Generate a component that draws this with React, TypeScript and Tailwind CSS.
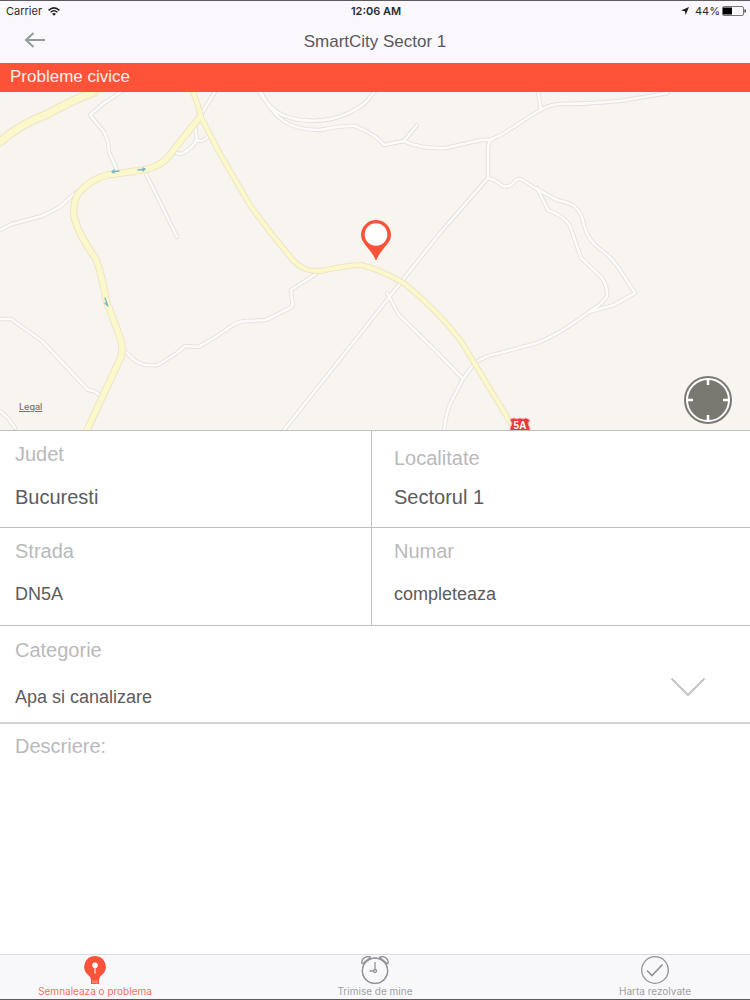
import { useState } from 'react';

const HELVETICA = "font-['Liberation_Sans',Arial,sans-serif]";

const minorRoads = [
  'M0 230 L12 224 L42 216 L60 207 L76 192',
  'M124 90 L104 103 L90 115 L104 132 L108 142 L109 152 L117 170',
  'M144 170 L158 198 L177 237',
  'M216 90 L199 118 M195 126 L197 140 Q193 147 182 154 L175 153 M196 140 L202 141 L208 137',
  'M0 319 L11 319 L42 341 L88 390 L94 391 L101 396',
  'M0 411 L8 418 L15 428',
  'M124 350 L133 359 Q142 367 158 365 L177 353 L185 346 L198 347 Q212 340 230 327 Q240 320 250 321 L266 320 L290 308 Q294 306 292 300 L291 290 L316 274',
  'M258 90 Q268 107 282 115 Q305 124 331 119 Q350 115 365 103 L376 90',
  'M260 90 Q270 112 285 122 Q298 130 320 130 Q345 125 355 126 Q377 135 384 145 L404 141 Q420 149 446 148 L481 140 L490 140',
  'M404 141 L417 125',
  'M490 140 L501 135 L540 110 Q552 104 560 104 Q590 104 620 101 L668 93',
  'M538 90 L541 110',
  'M490 140 L488 147 L488 178 L440 233 L284 430',
  'M488 178 L494 180 L503 186 Q510 188 515 181 Q519 177 524 181 L535 188 L557 200 Q571 203 575 207 Q582 213 584 225 Q588 241 600 249 Q611 257 618 267 L635 293 L614 305 L589 312',
  'M537 188 L548 210 Q568 218 571 229 L581 258 L597 273 Q608 282 607 296 Q604 303 589 312 Q560 334 537 343 L500 353 Q483 356 474 364 L463 379 L450 404 Q446 414 444 430',
  'M387 293 L399 315 L435 350 L463 379',
];

const mainRoads = [
  { d: 'M0 142 Q20 124 48 114 Q66 103 94 92', width: 7 },
  { d: 'M192 90 Q198 103 201 117 L219 152 L250 205 Q270 233 293 260 Q303 272 320 271 Q350 265 361 265 Q382 270 405 284 Q437 310 461 341 L515 430', width: 4 },
  { d: 'M200 117 L187 133 L169 156 Q160 167 143 170 L107 175 Q89 180 78 194 Q73 202 74 216 Q77 232 96 259 Q102 275 106 300 L121 340 Q123 350 121 357 L87 430', width: 5.5 },
];

function CityMap() {
  return (
    <svg
      className="block h-full w-full"
      viewBox="0 92 750 338"
      preserveAspectRatio="xMidYMid slice"
      fill="none"
      strokeLinejoin="round"
      strokeLinecap="round"
      aria-hidden="true"
    >
      <rect x="0" y="92" width="750" height="338" fill="#f8f4ef" />
      {minorRoads.map((d) => (
        <path key={d} d={d} stroke="#e5e1dc" strokeWidth="4.4" />
      ))}
      {minorRoads.map((d) => (
        <path key={d} d={d} stroke="#fcfbf9" strokeWidth="2.6" />
      ))}
      {mainRoads.map((r) => (
        <path key={r.d} d={r.d} stroke="#efe4c6" strokeWidth={r.width + 2} />
      ))}
      {mainRoads.map((r) => (
        <path key={r.d} d={r.d} stroke="#fbf9cb" strokeWidth={r.width} />
      ))}
      <g stroke="#74b8cc" strokeWidth="1.3">
        <path d="M119 171 L112 172 M114 170 L112 172 L114 173" />
        <path d="M138 170 L145 169 M143 168 L145 169 L143 171" />
        <path d="M105 298 L108 306 M105 303 L108 306" />
      </g>
      <path
        d="M511 419 L514 418 L517 419 Q520 417 523 419 L526 418 L530 420 L528 423 L530 429 V432 H510 V429 L512 423 L510 420 Z"
        fill="#e8383d"
        stroke="#f4a9a7"
        strokeWidth="1"
      />
      <text x="520" y="429" textAnchor="middle" fill="#fff" fontSize="10" fontWeight="700" fontFamily="Liberation Sans">
        5A
      </text>
    </svg>
  );
}

function Pin() {
  return (
    <svg className="block h-10 w-8" viewBox="-1 0 32 40" aria-hidden="true">
      <path d="M16 0 A15 15 0 0 0 1 15 C1 24 11 28 16 41 C21 28 31 24 31 15 A15 15 0 0 0 16 0Z" fill="#f9533a" />
      <circle cx="16" cy="14.500" r="11.300" fill="#fff" />
    </svg>
  );
}

function Crosshair() {
  return (
    <svg className="block h-12 w-12" viewBox="0 0 48 48" fill="none" aria-hidden="true">
      <circle cx="24" cy="24" r="24" fill="#797871" />
      <circle cx="24" cy="24" r="21" stroke="#fff" strokeWidth="2" />
      <path d="M24 3v6M24 39v6M3 24h6M39 24h6" stroke="#fff" strokeWidth="2.600" />
    </svg>
  );
}

function StatusBar() {
  return (
    <div className="grid h-5 grid-cols-3 items-center pr-1 pl-1.5 font-[Inter,sans-serif] text-[11px] leading-5 text-[#2a292c]">
      <div className="flex items-center gap-1.5">
        <span>Carrier</span>
        <svg className="h-[9px] w-3" viewBox="0 0 12 9" fill="none" stroke="#1d1d1f" aria-hidden="true">
          <path d="M0.600 3.300 Q6 -1.500 11.400 3.300" strokeWidth="1.600" />
          <path d="M2.600 5.300 Q6 2.300 9.400 5.300" strokeWidth="1.500" />
          <path d="M4 6.700 Q6 5.300 8 6.700 L6 8.800Z" fill="#1d1d1f" stroke="none" />
        </svg>
      </div>
      <span className="text-center font-semibold">12:06 AM</span>
      <div className="flex items-center justify-end gap-0.5">
        <svg className="mr-1 h-2 w-2" viewBox="0 0 8 8" fill="#1d1d1f" aria-hidden="true">
          <path d="M8 0 L4.600 8 L3.900 4.200 L0 3.600Z" />
        </svg>
        <span>44%</span>
        <svg className="h-[10px] w-6" viewBox="0 0 24 10" fill="none" aria-hidden="true">
          <rect x="0.500" y="0.500" width="21" height="9" rx="1.500" stroke="#77767a" />
          <rect x="1" y="1.500" width="9" height="7" fill="#000" />
          <path d="M22.500 3 Q24 3.500 24 5 Q24 6.500 22.500 7Z" fill="#333" />
        </svg>
      </div>
    </div>
  );
}

const labelClass = 'block text-xl leading-6 text-[#b9b9be]';
const inputClass = 'block w-full bg-transparent text-[#5b5b60] outline-none';

function BulbIcon() {
  return (
    <svg className="h-7 w-7" viewBox="0 0 28 28" aria-hidden="true">
      <path d="M14 0 A10.700 10.700 0 0 0 7 18.800 Q10 21 10 24 V28 H18 V24 Q18 21 21 18.800 A10.700 10.700 0 0 0 14 0Z" fill="#f9533a" />
      <circle cx="14" cy="9.200" r="2.800" fill="#fff" />
      <path d="M14 11 V17.500" stroke="#fff" strokeWidth="1.100" />
      <path d="M11 25h6M11 26.700h6" stroke="#fba493" strokeWidth="0.800" />
    </svg>
  );
}

function ClockIcon() {
  return (
    <svg className="h-7 w-7" viewBox="0 0 28 28" fill="none" stroke="#929297" strokeWidth="1.300" aria-hidden="true">
      <circle cx="14" cy="14.800" r="12.600" />
      <path d="M14 6v7.300M8.500 15H12.500" />
      <circle cx="14" cy="15" r="1.500" />
      <path d="M1.200 8 Q-0.300 4 3.500 1.600 Q7 -0.400 9.500 1.200 L1.200 8 M26.800 8 Q28.300 4 24.500 1.600 Q21 -0.400 18.500 1.200 L26.800 8" strokeLinejoin="round" />
      <circle cx="14" cy="14.800" r="12" fill="#f8f8fa" stroke="none" />
      <circle cx="14" cy="14.800" r="12.600" />
      <path d="M14 6v7.300M8.500 15H12.500" />
      <circle cx="14" cy="15" r="1.500" />
    </svg>
  );
}

function CheckIcon() {
  return (
    <svg className="h-7 w-7" viewBox="0 0 28 28" fill="none" stroke="#929297" aria-hidden="true">
      <circle cx="14" cy="14" r="13.300" strokeWidth="1.300" />
      <path d="M6 14.500 L11 19.500 L21.500 8.500" strokeWidth="1.700" />
    </svg>
  );
}

const tabs = [
  { label: 'Semnaleaza o problema', Icon: BulbIcon },
  { label: 'Trimise de mine', Icon: ClockIcon },
  { label: 'Harta rezolvate', Icon: CheckIcon },
];

export default function App() {
  const [active, setActive] = useState(0);

  return (
    <div className={`flex min-h-screen flex-col border-y border-[#5d5a60] bg-white ${HELVETICA}`}>
      <header className="bg-[#faf8fc]">
        <StatusBar />
        <div className="grid h-[42px] grid-cols-[1fr_auto_1fr] items-center">
          <button type="button" aria-label="Inapoi" className="ml-6 flex h-8 w-6 items-center pb-1">
            <svg className="h-4 w-6" viewBox="0 0 24 16" fill="none" stroke="#929a9d" strokeWidth="2" aria-hidden="true">
              <path d="M21 8H2M9.500 1L2 8L9.500 15" />
            </svg>
          </button>
          <h1 className="text-[17px] leading-6 text-[#58585c]">SmartCity Sector 1</h1>
        </div>
      </header>

      <h2 className="bg-[#fe5338] px-2.5 pb-px text-[17px] leading-7 text-[#fff0ea]">Probleme civice</h2>

      <section aria-label="Harta" className="relative h-[338px] overflow-hidden">
        <CityMap />
        <div className="absolute top-32 left-1/2 -translate-x-1/2">
          <Pin />
        </div>
        <a href="#legal" className="absolute bottom-[15px] left-[19px] font-[Inter,sans-serif] text-[9px] leading-4 font-medium text-[#77736f] underline">
          Legal
        </a>
        <button type="button" aria-label="Locatia mea" className="absolute right-[18px] bottom-1.5">
          <Crosshair />
        </button>
      </section>

      <form className="flex flex-1 flex-col">
        <div className="grid grid-cols-[372fr_378fr]">
          <div className="h-[97px] border-t border-r border-[#c0c0c2] pt-[11px] pl-[15px]">
            <label htmlFor="judet" className={labelClass}>Judet</label>
            <input id="judet" defaultValue="Bucuresti" className={`${inputClass} mt-[19px] text-xl leading-6`} />
          </div>
          <div className="h-[97px] border-t border-[#c0c0c2] pt-[15px] pl-[22px]">
            <label htmlFor="localitate" className={labelClass}>Localitate</label>
            <input id="localitate" defaultValue="Sectorul 1" className={`${inputClass} mt-[15px] text-xl leading-6`} />
          </div>
          <div className="h-[98px] border-t border-r border-[#c0c0c2] pt-[11px] pl-[15px]">
            <label htmlFor="strada" className={labelClass}>Strada</label>
            <input id="strada" defaultValue="DN5A" className={`${inputClass} mt-[19px] text-lg leading-6`} />
          </div>
          <div className="h-[98px] border-t border-[#c0c0c2] pt-[11px] pl-[22px]">
            <label htmlFor="numar" className={labelClass}>Numar</label>
            <input id="numar" defaultValue="completeaza" className={`${inputClass} mt-[19px] text-lg leading-6`} />
          </div>
        </div>

        <div className="relative h-[97px] border-t border-[#c0c0c2] pt-3 pl-[15px]">
          <label htmlFor="categorie" className={labelClass}>Categorie</label>
          <select id="categorie" defaultValue="Apa si canalizare" className={`${inputClass} mt-[23px] appearance-none text-lg leading-6`}>
            <option>Apa si canalizare</option>
          </select>
          <svg className="pointer-events-none absolute right-11 bottom-[25px] h-5 w-9" viewBox="0 0 36 20" fill="none" stroke="#c4c4c6" strokeWidth="2" aria-hidden="true">
            <path d="M1.500 1.500L18 18L34.500 1.500" />
          </svg>
        </div>

        <div className="flex flex-1 flex-col border-t-2 border-[#d2d2d4] pt-[10px] pl-[15px]">
          <label htmlFor="descriere" className={labelClass}>Descriere:</label>
          <textarea id="descriere" className={`${inputClass} flex-1 resize-none text-lg`} />
        </div>
      </form>

      <nav className="flex h-[45px] justify-between border-t border-[#dcdcde] bg-[#f8f8fa] font-[Inter,sans-serif]">
        {tabs.map(({ label, Icon }, i) => (
          <button
            key={label}
            type="button"
            aria-current={i === active ? 'page' : undefined}
            onClick={() => setActive(i)}
            className={`flex w-[190px] flex-col items-center pt-px text-[10px] leading-[14px] ${i === active ? 'text-[#f9735e]' : 'text-[#a0a0a5]'}`}
          >
            <Icon />
            <span>{label}</span>
          </button>
        ))}
      </nav>
    </div>
  );
}
